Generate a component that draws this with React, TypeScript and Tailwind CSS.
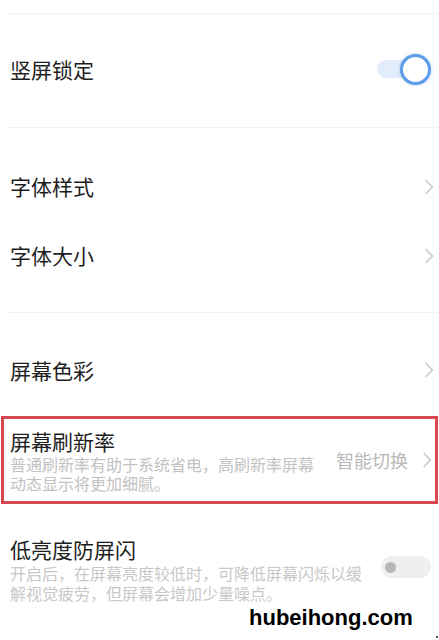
import React from "react";

const Chevron = ({ className = "" }: { className?: string }) => (
  <svg width="10" height="16" viewBox="0 0 10 16" className={className} fill="none">
    <path d="M2 1.5 L8.5 8 L2 14.5" stroke="#c9c9c9" strokeWidth="1.6" strokeLinecap="round" strokeLinejoin="round" />
  </svg>
);

const Divider = () => <div className="ml-[8px] h-px bg-[#f2f2f2]" />;

export default function App() {
  const cjk = { fontFamily: '"Noto Sans CJK SC", "Noto Sans", sans-serif' };
  return (
    <div className="w-[439px] h-[640px] bg-white overflow-hidden relative" style={cjk}>
      <div className="h-[13px]" />
      <Divider />
      {/* 竖屏锁定 */}
      <div className="h-[113px] flex items-center justify-between pl-[10px] pr-[8px] pb-[3px]">
        <span className="text-[21px] text-[#1e1e1e] leading-none">竖屏锁定</span>
        <div className="relative w-[54px] h-[34px] flex items-center">
          <div className="absolute left-0 right-[12px] h-[18px] rounded-full bg-[#e3ecfb]" />
          <div className="absolute right-0 w-[31px] h-[31px] rounded-full bg-white border-[3px] border-[#5c9ce8] shadow-[0_0_3px_rgba(92,156,232,0.5)]" />
        </div>
      </div>
      <Divider />
      {/* 字体 */}
      <div className="h-[24px]" />
      <div className="h-[69px] flex items-center justify-between pl-[10px] pr-[5px]">
        <span className="text-[21px] text-[#1e1e1e] leading-none">字体样式</span>
        <Chevron />
      </div>
      <div className="h-[69px] flex items-center justify-between pl-[10px] pr-[5px]">
        <span className="text-[21px] text-[#1e1e1e] leading-none">字体大小</span>
        <Chevron />
      </div>
      <div className="h-[22px]" />
      <Divider />
      {/* 屏幕色彩 */}
      <div className="h-[103px] flex items-center justify-between pl-[10px] pr-[5px] pt-[11px]">
        <span className="text-[21px] text-[#1e1e1e] leading-none">屏幕色彩</span>
        <Chevron />
      </div>
      {/* 屏幕刷新率 (highlighted) */}
      <div className="mx-[1px] h-[88px] border-[3px] border-[#d8464f] flex items-center justify-between pl-[6px] pr-[3px]">
        <div className="flex flex-col">
          <div className="text-[21px] text-[#1e1e1e] leading-[28px]">屏幕刷新率</div>
          <div className="text-[16px] text-[#c2c2c2] leading-[19.5px] w-[310px]">
            普通刷新率有助于系统省电，高刷新率屏幕动态显示将更加细腻。
          </div>
        </div>
        <div className="flex items-center gap-[14px]">
          <span className="text-[18px] text-[#b8b8b8] leading-none">智能切换</span>
          <Chevron />
        </div>
      </div>
      {/* 低亮度防屏闪 */}
      <div className="flex items-start justify-between pl-[10px] pr-[8px] pt-[31px]">
        <div className="flex flex-col">
          <div className="text-[21px] text-[#1e1e1e] leading-[28px]">低亮度防屏闪</div>
          <div className="text-[16px] text-[#c8c8c8] leading-[20px] w-[356px]">
            开启后，在屏幕亮度较低时，可降低屏幕闪烁以缓解视觉疲劳，但屏幕会增加少量噪点。
          </div>
        </div>
        <div className="mt-[21px] w-[50px] h-[22px] rounded-full bg-[#efefef] flex items-center pl-[4px]">
          <div className="w-[11px] h-[11px] rounded-full bg-[#b7b7b7]" />
        </div>
      </div>
      <div
        className="absolute left-[249px] top-[607px] text-[22px] font-bold text-black leading-none"
        style={{ fontFamily: '"Liberation Sans", Arial, sans-serif' }}
      >
        hubeihong.com
      </div>
      <div className="absolute left-[436px] top-[636px] w-[2px] h-[2px] bg-[#555]" />
    </div>
  );
}
